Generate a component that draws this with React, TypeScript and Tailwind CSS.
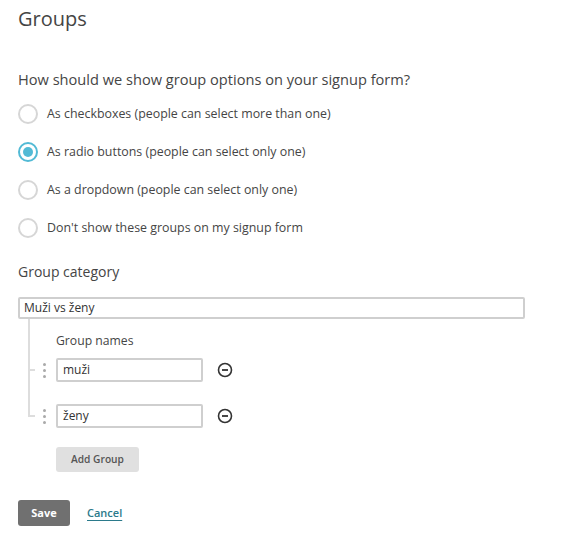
import React from 'react'

const options = [
  'As checkboxes (people can select more than one)',
  'As radio buttons (people can select only one)',
  'As a dropdown (people can select only one)',
  "Don't show these groups on my signup form",
]

function Dots() {
  return (
    <div className="w-[21px] flex flex-col gap-[3px] pl-[8px]">
      <span className="w-[3px] h-[3px] rounded-full bg-[#aaa]"></span>
      <span className="w-[3px] h-[3px] rounded-full bg-[#aaa]"></span>
      <span className="w-[3px] h-[3px] rounded-full bg-[#aaa]"></span>
    </div>
  )
}

function MinusIcon() {
  return (
    <svg width="16" height="16" viewBox="0 0 16 16" className="ml-[14px]">
      <circle cx="8" cy="8" r="6.5" fill="none" stroke="#333" strokeWidth="1.6" />
      <line x1="5" y1="8" x2="11" y2="8" stroke="#333" strokeWidth="1.8" />
    </svg>
  )
}

export default function App() {
  const selected = 1

  return (
    <div className="min-h-screen bg-white px-[18px] pt-[6px] text-[#454545]" style={{ fontFamily: '"Open Sans", sans-serif' }}>
      <h1 className="text-[20px] leading-[26px]">Groups</h1>

      <p className="mt-[37px] text-[14.6px] leading-[20px]">How should we show group options on your signup form?</p>

      {/* radio options */}
      <div className="mt-[6px] flex flex-col">
        {options.map((opt, i) => (
          <div key={i} className="h-[38px] flex items-center">
            {i === selected ? (
              <span className="w-[20px] h-[20px] rounded-full border-2 border-[#52bad5] flex items-center justify-center">
                <span className="w-[10px] h-[10px] rounded-full bg-[#52bad5]"></span>
              </span>
            ) : (
              <span className="w-[20px] h-[20px] rounded-full border-2 border-[#d6d6d6]"></span>
            )}
            <span className="ml-[9px] text-[12.4px]">{opt}</span>
          </div>
        ))}
      </div>

      <p className="mt-[15px] text-[14px] leading-[20px]">Group category</p>

      <div className="mt-[15px] w-[507px] h-[22px] border-2 border-[#cfcfcf] rounded-[2px] flex items-center pl-[4px] text-[12px] text-[#333]">
        Muži vs ženy
      </div>

      {/* group tree */}
      <div className="ml-[10px]">
        <div className="border-l-2 border-[#ddd] h-[39px] pl-[26px] flex items-center pt-[6px] text-[12.2px]">
          Group names
        </div>

        <div className="flex h-[24px]">
          <div className="w-[7px] border-l-2 border-[#ddd] flex items-center">
            <span className="w-[5px] h-[2px] bg-[#ddd]"></span>
          </div>
          <div className="flex items-center">
            <Dots />
            <div className="w-[147px] h-[24px] border-2 border-[#cfcfcf] rounded-[2px] flex items-center pl-[5px] text-[12px] text-[#333]">muži</div>
            <MinusIcon />
          </div>
        </div>

        <div className="border-l-2 border-[#ddd] h-[22px]"></div>

        <div className="flex h-[24px]">
          <div className="w-[7px] h-[13px] border-l-2 border-b-2 border-[#ddd]"></div>
          <div className="flex items-center">
            <Dots />
            <div className="w-[147px] h-[24px] border-2 border-[#cfcfcf] rounded-[2px] flex items-center pl-[5px] text-[12px] text-[#333]">ženy</div>
            <MinusIcon />
          </div>
        </div>

        <button className="mt-[19px] ml-[28px] w-[83px] h-[25px] bg-[#e0e0e0] rounded-[3px] text-[10.2px] font-semibold text-[#555]">
          Add Group
        </button>
      </div>

      <div className="mt-[28px] flex items-center">
        <button className="w-[52px] h-[26px] bg-[#707070] rounded-[3px] text-[11px] font-bold text-white">Save</button>
        <a className="ml-[17px] text-[11px] font-semibold text-[#2b7a8b] underline underline-offset-[3px]">Cancel</a>
      </div>
    </div>
  )
}
